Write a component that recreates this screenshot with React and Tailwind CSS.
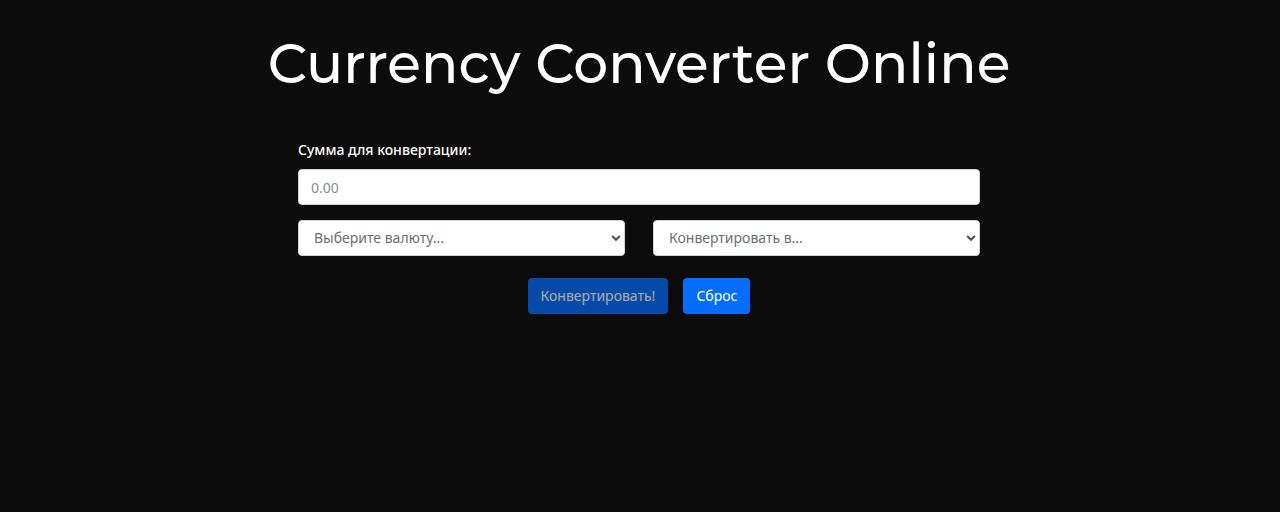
import { useState } from "react";

const currencies = ["USD", "EUR", "RUB", "GBP"];

function CurrencySelect({ label, placeholder, value, onChange }) {
  return (
    <div className="relative min-w-0 flex-1">
      <select
        aria-label={label}
        value={value}
        onChange={(e) => onChange(e.target.value)}
        className="block h-9 w-full appearance-none rounded border border-[#ced4da] bg-white pr-8 pl-[15px] text-sm leading-6 text-[#6c6f73]"
      >
        <option value="">{placeholder}</option>
        {currencies.map((code) => (
          <option key={code} value={code}>{code}</option>
        ))}
      </select>
      <svg
        viewBox="0 0 10 10"
        aria-hidden="true"
        className="pointer-events-none absolute top-[13px] right-1 size-[10px] text-[#495057]"
      >
        <path d="M1.2 3l3.8 3.8L8.8 3" fill="none" stroke="currentColor" strokeWidth="2" />
      </svg>
    </div>
  );
}

export default function App() {
  const [amount, setAmount] = useState("");
  const [from, setFrom] = useState("");
  const [to, setTo] = useState("");

  const reset = () => {
    setAmount("");
    setFrom("");
    setTo("");
  };

  return (
    <main className="min-h-screen bg-[#0c0c0c] pt-7 pr-[18px] pl-4 font-['Noto_Sans',sans-serif] text-white">
      <h1 className="text-center font-['Montserrat',sans-serif] text-[55px] leading-[72px] font-medium">
        Currency Converter Online
      </h1>
      <form className="mx-auto mt-10 max-w-[682px]" onSubmit={(e) => e.preventDefault()}>
        <label htmlFor="amount" className="block text-sm leading-5 font-medium">
          Сумма для конвертации:
        </label>
        <input
          id="amount"
          type="text"
          inputMode="decimal"
          placeholder="0.00"
          value={amount}
          onChange={(e) => setAmount(e.target.value)}
          className="mt-[9px] block h-9 w-full rounded border border-[#ced4da] bg-white px-3 text-sm leading-6 text-[#495057] placeholder:text-[#868e96]"
        />
        <div className="mt-[15px] flex gap-7">
          <CurrencySelect label="Исходная валюта" placeholder="Выберите валюту..." value={from} onChange={setFrom} />
          <CurrencySelect label="Целевая валюта" placeholder="Конвертировать в..." value={to} onChange={setTo} />
        </div>
        <div className="mt-[22px] flex justify-center gap-[15px]">
          <button
            type="submit"
            disabled={!amount || !from || !to}
            className="h-9 rounded bg-[#056dff] px-[13px] text-sm leading-6 disabled:opacity-65"
          >
            Конвертировать!
          </button>
          <button type="button" onClick={reset} className="h-9 rounded bg-[#056dff] px-[13px] text-sm leading-6">
            Сброс
          </button>
        </div>
      </form>
    </main>
  );
}
